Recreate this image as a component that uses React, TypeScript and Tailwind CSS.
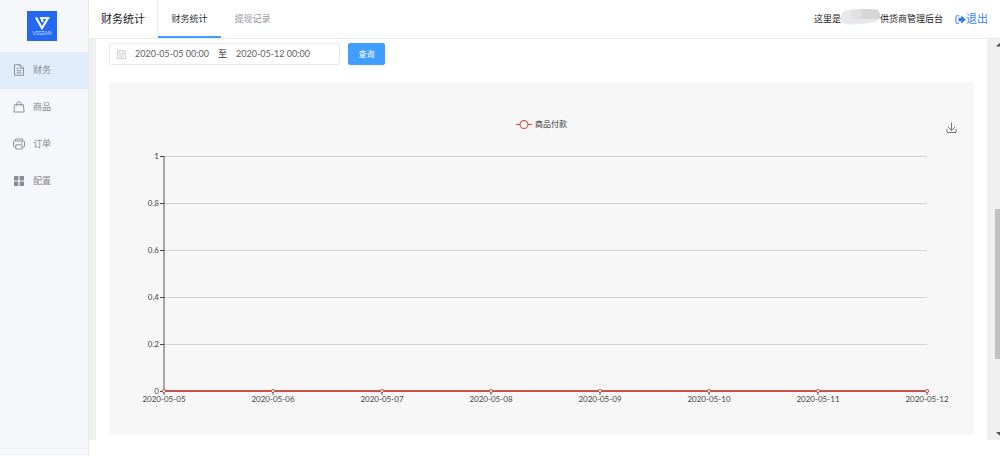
const menus = [
  { name: "财务", icon: <DocIcon />, active: true },
  { name: "商品", icon: <BagIcon />, active: false },
  { name: "订单", icon: <PrinterIcon />, active: false },
  { name: "配置", icon: <GridIcon />, active: false },
];

const days = [
  "2020-05-05",
  "2020-05-06",
  "2020-05-07",
  "2020-05-08",
  "2020-05-09",
  "2020-05-10",
  "2020-05-11",
  "2020-05-12",
];

const ticks = ["1", "0.8", "0.6", "0.4", "0.2", "0"];

function DocIcon() {
  return (
    <svg className="h-3 w-3" viewBox="0 0 12 12" fill="none" stroke="#909399" strokeWidth="1">
      <path d="M1.5 .7h5.8l3.2 3.2v7.4h-9z" />
      <path d="M7 .7v3.5h3.5M3.5 4.5h2M3.5 6.7h5M3.5 8.9h5" />
    </svg>
  );
}

function BagIcon() {
  return (
    <svg className="h-3 w-3" viewBox="0 0 12 12" fill="none" stroke="#909399" strokeWidth="1">
      <path d="M1.6 3.7h8.8l.7 7.3H.9z" />
      <path d="M3.8 5V3a2.2 2.2 0 0 1 4.4 0v2" />
    </svg>
  );
}

function PrinterIcon() {
  return (
    <svg className="h-3 w-3" viewBox="0 0 12 12" fill="none" stroke="#909399" strokeWidth="1">
      <path d="M2.5 3V1h7v2M2.8 9H1.5a1 1 0 0 1-1-1V4a1 1 0 0 1 1-1h9a1 1 0 0 1 1 1v4a1 1 0 0 1-1 1H9.2" />
      <path d="M2.8 6.8h6.4v4.2H2.8zM8 4.9h1.5" />
    </svg>
  );
}

function GridIcon() {
  return (
    <svg className="h-3 w-3" viewBox="0 0 12 12" fill="#8a8d93">
      <rect x="1" y="1" width="4.4" height="4.4" rx=".4" />
      <rect x="6.6" y="1" width="4.4" height="4.4" rx=".4" />
      <rect x="1" y="6.6" width="4.4" height="4.4" rx=".4" />
      <rect x="6.6" y="6.6" width="4.4" height="4.4" rx=".4" />
    </svg>
  );
}

function Sidebar() {
  return (
    <aside className="flex w-[89px] shrink-0 flex-col border-r border-[#e8eaee] bg-[#f5f7fb]">
      <div className="flex h-[52px] items-center pl-[27px]">
        <svg className="h-[30px] w-[30px]" viewBox="0 0 30 30">
          <rect width="30" height="30" fill="#2468f2" />
          <path
            d="M9 6.500L15 17.200 21 7H14.200L16 11"
            fill="none"
            stroke="#fff"
            strokeWidth="2.100"
          />
          <text x="15" y="24" textAnchor="middle" fontSize="5" fill="#d5e2ff">VSSZAN</text>
        </svg>
      </div>
      <nav className="flex-1">
        {menus.map((m) => (
          <a
            key={m.name}
            href="#"
            className={
              m.active
                ? "flex h-[37px] items-center gap-2 bg-[#e0ecfa] pb-px pl-[13px] text-[9px] text-[#85898f]"
                : "flex h-[37px] items-center gap-2 pb-px pl-[13px] text-[9px] text-[#85898f]"
            }
          >
            {m.icon}
            {m.name}
          </a>
        ))}
      </nav>
      <div className="h-2 border-t border-[#eceef3]"></div>
    </aside>
  );
}

function Header() {
  return (
    <header className="flex h-[39px] items-stretch border-b border-[#ebebeb] bg-white">
      <h1 className="flex w-[69px] items-center justify-center border-r border-[#ebebeb] text-[11px] text-[#222]">
        财务统计
      </h1>
      <nav className="flex text-[9px]">
        <a href="#" className="flex w-[63px] items-center justify-center border-b-2 border-[#409eff] pt-px text-[#303133]">
          财务统计
        </a>
        <a href="#" className="flex w-[63px] items-center justify-center text-[#909399]">
          提现记录
        </a>
      </nav>
      <div className="ml-auto flex items-center pr-3 text-[9px] text-[#222]">
        <span>这里是</span>
        {/* shop name is masked */}
        <svg className="mb-1 h-4 w-[39px]" viewBox="0 0 39 16">
          <path d="M4 1.500Q20 -.5 36 .5Q39 2 39 8Q38 12 33 13Q20 16 6 15.500Q0 14 0 8Q0 3 4 1.500z" fill="#e6e8ea" />
          <path d="M20 0Q30 -.2 36 .5Q39 2 39 8L38.500 10H20z" fill="#d6d6d8" />
          <path d="M10 .7L20 0V10H10z" fill="#dfe0e2" />
        </svg>
        <span>供货商管理后台</span>
        <a href="#" className="ml-3 flex items-center text-[11px] text-[#3a82f0]">
          <svg className="h-[11px] w-[11px]" viewBox="0 0 12 12">
            <path d="M4.500 1.800H2.400A1.400 1.400 0 0 0 1 3.200v5.600a1.400 1.400 0 0 0 1.400 1.400h2.100" fill="none" stroke="#3a82f0" strokeWidth="1.1" />
            <path d="M3.800 4h3V1.500L11.800 6 6.800 10.500V8h-3z" fill="#2f7df6" />
          </svg>
          退出
        </a>
      </div>
    </header>
  );
}

function Filter() {
  return (
    <form className="flex gap-2">
      <div className="flex h-[22px] w-[231px] items-center rounded-[3px] border border-[#e4e7ed] pl-[7px] text-[9px] text-[#606266]">
        <svg className="h-[9px] w-[9px] shrink-0" viewBox="0 0 8 8" fill="none" stroke="#c0c4cc" strokeWidth=".7">
          <path d="M.4 1h7.200v6.600H.4zM.4 3h7.200M2.200 0v1.500M5.800 0v1.500M1.800 4.600h4.400M1.800 6.100h4.400" />
        </svg>
        <input
          aria-label="开始日期"
          defaultValue="2020-05-05 00:00"
          className="w-[92px] bg-transparent text-center outline-none"
        />
        <span className="w-[9px] text-[#303133]">至</span>
        <input
          aria-label="结束日期"
          defaultValue="2020-05-12 00:00"
          className="w-[92px] bg-transparent text-center outline-none"
        />
      </div>
      <button type="button" className="h-[22px] w-[37px] rounded-[2px] bg-[#409eff] text-[8px] text-white">
        查询
      </button>
    </form>
  );
}

function Chart() {
  return (
    <div className="mt-[17px] bg-[#f7f7f7]">
      <svg className="block h-auto w-full" viewBox="0 0 865 353" fontSize="8" fill="#444">
        <path d="M407 42.500h16" stroke="#d0524f" strokeWidth="1.200" />
        <circle cx="415" cy="42.500" r="3.900" fill="#fff" stroke="#d0524f" strokeWidth="1.100" />
        <text x="426" y="45" fill="#333">商品付款</text>
        <path
          d="M842.500 40.500v8M839 45l3.500 3.500L846 45M838 47v3.500h9V47"
          fill="none"
          stroke="#777"
          strokeWidth="1"
        />
        {ticks.map((t, i) => (
          <g key={t}>
            <path d={`M55 ${74.5 + i * 47}H818`} stroke="#d3d3d3" />
            <path d={`M51 ${74.5 + i * 47}h4`} stroke="#444" />
            <text x="50" y={77 + i * 47} textAnchor="end">{t}</text>
          </g>
        ))}
        <path d="M55 74V310" stroke="#555" />
        <path d="M55 309H818" stroke="#c9504c" strokeWidth="2" />
        {days.map((d, i) => (
          <g key={d}>
            <path d={`M${55 + i * 109} 309v4`} stroke="#555" />
            <circle cx={55 + i * 109} cy="309" r="1.600" fill="#fff" stroke="#c9504c" />
            <text x={55 + i * 109} y="320" textAnchor="middle">{d}</text>
          </g>
        ))}
      </svg>
    </div>
  );
}

function ScrollBar() {
  return (
    <div className="flex w-[5px] shrink-0 flex-col bg-[#f0f0f0]">
      <svg className="mt-1 h-1 w-[5px]" viewBox="0 0 5 4">
        <path d="M1 3.500L4.500 0 8 3.500z" fill="#505050" />
      </svg>
      <div className="grow-[162]"></div>
      <div className="grow-[150] bg-[#c1c1c1]"></div>
      <div className="grow-[73]"></div>
      <svg className="mb-1 h-1 w-[5px]" viewBox="0 0 5 4">
        <path d="M1 0L4.500 3.500 8 0z" fill="#505050" />
      </svg>
    </div>
  );
}

export default function App() {
  return (
    <div className="flex min-h-screen bg-white font-['Lato','Noto_Sans_CJK_SC',sans-serif]">
      <Sidebar />
      <div className="min-w-0 flex-1">
        <Header />
        <div className="flex bg-[#f0f0f0] pl-[7px]">
          <main className="mr-2 min-w-0 flex-1 bg-white px-[13px] pt-1 pb-[5px]">
            <Filter />
            <Chart />
          </main>
          <ScrollBar />
        </div>
      </div>
    </div>
  );
}
